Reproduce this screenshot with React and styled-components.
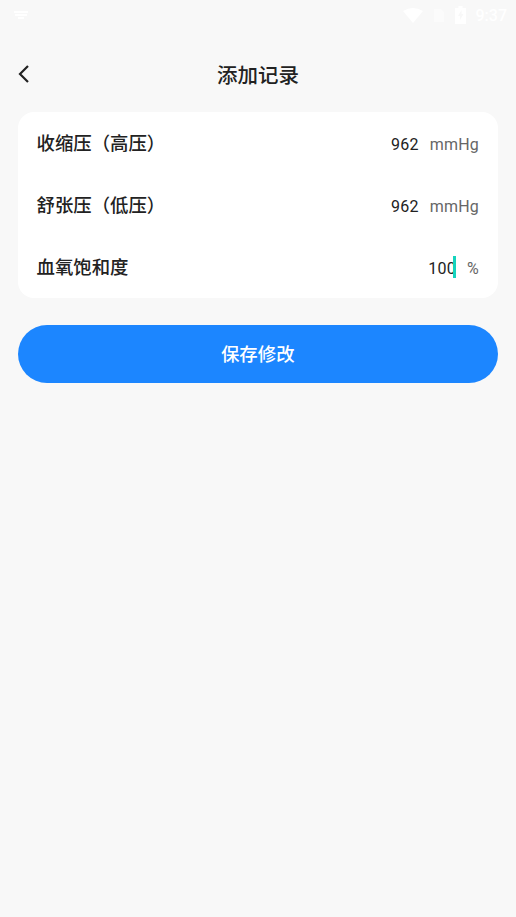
import React from "react";
import styled, { createGlobalStyle } from "styled-components";

const rows = [
  { label: "收缩压（高压）", value: "962", unit: "mmHg" },
  { label: "舒张压（低压）", value: "962", unit: "mmHg" },
  { label: "血氧饱和度", value: "100", unit: "%", focused: true },
];

export default function App() {
  return (
    <Page>
      <GlobalStyle />
      <StatusBar>
        <NotifyIcon width="16" height="8" viewBox="0 0 16 8">
          <path d="M1 0h14v2H1zM2 3h12v2H2zM5 6h6v2H5z" fill="#fff" />
        </NotifyIcon>
        <StatusRight>
          <svg width="20" height="15" viewBox="0 0 20 15">
            <path d="M0 3 Q10 -3 20 3 L10 15 Z" fill="#fff" />
          </svg>
          <svg width="12" height="15" viewBox="0 0 12 15">
            <path d="M1 1h7l3 3v10H1z" fill="#fff" fillOpacity="0.45" />
          </svg>
          <svg width="11" height="18" viewBox="0 0 11 18">
            <path d="M3.5 0h4v2H11v16H0V2h3.5z" fill="#fff" />
            <path d="M6.5 4 3 10h2v4l3.5-6h-2z" fill="#f8f8f8" />
          </svg>
          <Clock>9:37</Clock>
        </StatusRight>
      </StatusBar>
      <Header>
        <BackButton>
          <svg width="14" height="20" viewBox="0 0 14 20" fill="none">
            <path d="M11 2 3 10l8 8" stroke="#222" strokeWidth="2.2" />
          </svg>
        </BackButton>
        <Title>添加记录</Title>
      </Header>
      <Card>
        {rows.map((row) => (
          <Row key={row.label}>
            <Label>{row.label}</Label>
            <Value>
              {row.value}
              {row.focused && <Caret />}
            </Value>
            <Unit>{row.unit}</Unit>
          </Row>
        ))}
      </Card>
      <SaveButton>保存修改</SaveButton>
    </Page>
  );
}

const GlobalStyle = createGlobalStyle`
  html, body {
    margin: 0;
    padding: 0;
    background: #f8f8f8;
  }
  * {
    box-sizing: border-box;
  }
`;

const Page = styled.div`
  width: 516px;
  height: 917px;
  overflow: hidden;
  background: #f8f8f8;
  font-family: Roboto, "Noto Sans CJK SC", sans-serif;
`;

const StatusBar = styled.div`
  height: 30px;
  padding: 0 9px 0 13px;
  display: flex;
  align-items: center;
  justify-content: space-between;
`;

const NotifyIcon = styled.svg`
  display: block;
`;

const StatusRight = styled.div`
  display: flex;
  align-items: center;
  gap: 10px;
`;

const Clock = styled.span`
  color: #fff;
  font-size: 16px;
  font-weight: 500;
`;

const Header = styled.div`
  position: relative;
  height: 82px;
  padding-top: 6px;
  display: flex;
  align-items: center;
  justify-content: center;
`;

const BackButton = styled.div`
  position: absolute;
  left: 17px;
  top: 34px;
  display: flex;
`;

const Title = styled.div`
  font-size: 20.5px;
  font-weight: 500;
  color: #222;
`;

const Card = styled.div`
  margin: 0 18.5px 0 18px;
  padding-right: 18.5px;
  padding-left: 19px;
  height: 186px;
  background: #fff;
  border-radius: 16px;
`;

const Row = styled.div`
  height: 62px;
  display: flex;
  align-items: center;
`;

const Label = styled.div`
  flex: 1;
  margin-left: -0.5px;
  padding-bottom: 2px;
  font-size: 18.4px;
  font-weight: 500;
  color: #222;
`;

const Value = styled.div`
  position: relative;
  padding-top: 2px;
  font-size: 16px;
  letter-spacing: 0.25px;
  color: #222;
`;

const Caret = styled.span`
  position: absolute;
  right: 0;
  top: -1px;
  width: 3px;
  height: 22px;
  background: #14d3bd;
`;

const Unit = styled.div`
  margin-left: 11px;
  padding-top: 2px;
  font-size: 16px;
  letter-spacing: 0.2px;
  color: #666;
`;

const SaveButton = styled.div`
  margin: 27px 18.5px 0 18px;
  height: 58px;
  padding-bottom: 2px;
  border-radius: 29px;
  background: #1c86ff;
  color: #fff;
  font-size: 18.4px;
  font-weight: 500;
  display: flex;
  align-items: center;
  justify-content: center;
`;
